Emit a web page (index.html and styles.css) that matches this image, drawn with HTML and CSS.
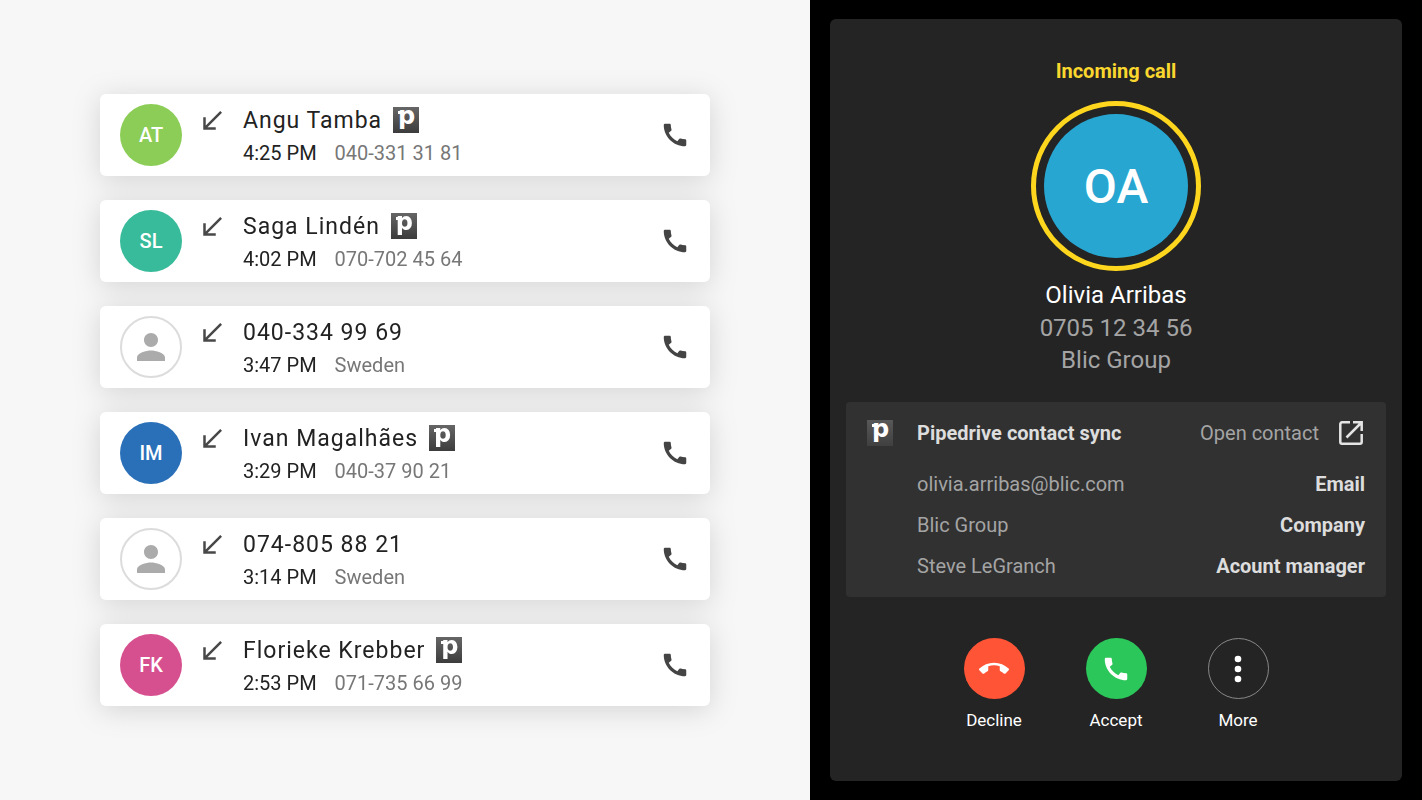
FILE: index.html
```
<!DOCTYPE html>
<html lang="en">
<head>
    <meta charset="UTF-8">
    <meta name="viewport" content="width=device-width, initial-scale=1.0">
    <title>Calls</title>
    <link rel="stylesheet" href="styles.css">
</head>
<body>
    <!-- Shared icons -->
    <svg class="sprite" aria-hidden="true">
        <symbol id="icon-received" viewBox="0 0 24 24">
            <path d="M20 5.41L18.59 4 7 15.59V9H5v10h10v-2H8.41z"/>
        </symbol>
        <symbol id="icon-phone" viewBox="0 0 24 24">
            <path d="M20.01 15.38c-1.23 0-2.42-.2-3.53-.56a.977.977 0 0 0-1.01.24l-1.57 1.97c-2.83-1.35-5.48-3.9-6.89-6.83l1.95-1.66c.27-.28.35-.67.24-1.02-.37-1.11-.56-2.3-.56-3.53 0-.54-.45-.99-.99-.99H4.19C3.65 3 3 3.24 3 3.99 3 13.28 10.73 21 20.01 21c.71 0 .99-.63.99-1.18v-3.45c0-.54-.45-.99-.99-.99z"/>
        </symbol>
        <symbol id="icon-person" viewBox="0 0 24 24">
            <path d="M12 12c2.21 0 4-1.79 4-4s-1.79-4-4-4-4 1.79-4 4 1.79 4 4 4zm0 2c-2.67 0-8 1.34-8 4v2h16v-2c0-2.66-5.33-4-8-4z"/>
        </symbol>
    </svg>

    <!-- Recent calls -->
    <main class="recent">
        <ul class="call-list">
            <li class="call">
                <div class="avatar green">AT</div>
                <svg class="received"><use href="#icon-received"/></svg>
                <div class="call-info">
                    <div class="call-name">Angu Tamba <span class="logo">p</span></div>
                    <div class="call-meta"><time>4:25 PM</time><span>040-331 31 81</span></div>
                </div>
                <button class="call-button" aria-label="Call Angu Tamba"><svg><use href="#icon-phone"/></svg></button>
            </li>
            <li class="call">
                <div class="avatar teal">SL</div>
                <svg class="received"><use href="#icon-received"/></svg>
                <div class="call-info">
                    <div class="call-name">Saga Lindén <span class="logo">p</span></div>
                    <div class="call-meta"><time>4:02 PM</time><span>070-702 45 64</span></div>
                </div>
                <button class="call-button" aria-label="Call Saga Lindén"><svg><use href="#icon-phone"/></svg></button>
            </li>
            <li class="call">
                <div class="avatar unknown"><svg><use href="#icon-person"/></svg></div>
                <svg class="received"><use href="#icon-received"/></svg>
                <div class="call-info">
                    <div class="call-name">040-334 99 69</div>
                    <div class="call-meta"><time>3:47 PM</time><span>Sweden</span></div>
                </div>
                <button class="call-button" aria-label="Call 040-334 99 69"><svg><use href="#icon-phone"/></svg></button>
            </li>
            <li class="call">
                <div class="avatar blue">IM</div>
                <svg class="received"><use href="#icon-received"/></svg>
                <div class="call-info">
                    <div class="call-name">Ivan Magalhães <span class="logo">p</span></div>
                    <div class="call-meta"><time>3:29 PM</time><span>040-37 90 21</span></div>
                </div>
                <button class="call-button" aria-label="Call Ivan Magalhães"><svg><use href="#icon-phone"/></svg></button>
            </li>
            <li class="call">
                <div class="avatar unknown"><svg><use href="#icon-person"/></svg></div>
                <svg class="received"><use href="#icon-received"/></svg>
                <div class="call-info">
                    <div class="call-name">074-805 88 21</div>
                    <div class="call-meta"><time>3:14 PM</time><span>Sweden</span></div>
                </div>
                <button class="call-button" aria-label="Call 074-805 88 21"><svg><use href="#icon-phone"/></svg></button>
            </li>
            <li class="call">
                <div class="avatar pink">FK</div>
                <svg class="received"><use href="#icon-received"/></svg>
                <div class="call-info">
                    <div class="call-name">Florieke Krebber <span class="logo">p</span></div>
                    <div class="call-meta"><time>2:53 PM</time><span>071-735 66 99</span></div>
                </div>
                <button class="call-button" aria-label="Call Florieke Krebber"><svg><use href="#icon-phone"/></svg></button>
            </li>
        </ul>
    </main>

    <!-- Incoming call -->
    <aside class="incoming">
        <div class="incoming-card">
            <h1>Incoming call</h1>
            <div class="ring"><div class="caller-avatar">OA</div></div>
            <div class="caller">
                <h2>Olivia Arribas</h2>
                <p>0705 12 34 56</p>
                <p>Blic Group</p>
            </div>

            <section class="sync">
                <div class="sync-header">
                    <span class="logo">p</span>
                    <h3>Pipedrive contact sync</h3>
                    <a href="#contact">Open contact
                        <svg viewBox="0 0 24 24"><path d="M11 1.3H3A1.7 1.7 0 0 0 1.3 3v18A1.7 1.7 0 0 0 3 22.7h18a1.7 1.7 0 0 0 1.7-1.7v-8M14 1.3h8.7V10M22.5 1.5l-15 15"/></svg>
                    </a>
                </div>
                <dl>
                    <div><dt>Email</dt><dd>olivia.arribas@blic.com</dd></div>
                    <div><dt>Company</dt><dd>Blic Group</dd></div>
                    <div><dt>Acount manager</dt><dd>Steve LeGranch</dd></div>
                </dl>
            </section>

            <div class="actions">
                <button class="action">
                    <span class="circle decline"><svg viewBox="0 0 24 24"><path d="M12 9c-1.6 0-3.15.25-4.6.72v3.1c0 .39-.23.74-.56.9-.98.49-1.87 1.12-2.66 1.85-.18.18-.43.28-.7.28-.28 0-.53-.11-.71-.29L.29 13.08c-.18-.17-.29-.42-.29-.7 0-.28.11-.53.29-.71C3.34 8.78 7.46 7 12 7s8.66 1.78 11.71 4.67c.18.18.29.43.29.71 0 .28-.11.53-.29.71l-2.48 2.48c-.18.18-.43.29-.71.29-.27 0-.52-.11-.7-.28-.79-.74-1.69-1.36-2.67-1.85-.33-.16-.56-.5-.56-.9v-3.1C15.15 9.25 13.6 9 12 9z"/></svg></span>
                    Decline
                </button>
                <button class="action">
                    <span class="circle accept"><svg><use href="#icon-phone"/></svg></span>
                    Accept
                </button>
                <button class="action">
                    <span class="circle more"><svg viewBox="0 0 30 30"><circle cx="15" cy="5" r="3.3"/><circle cx="15" cy="15" r="3.3"/><circle cx="15" cy="25" r="3.3"/></svg></span>
                    More
                </button>
            </div>
        </div>
    </aside>
</body>
</html>
```
FILE: styles.css
```
* {
    box-sizing: border-box;
}
body {
    margin: 0;
    min-height: 100vh;
    display: grid;
    grid-template-columns: 810fr 612fr;
    font-family: Roboto, Arial, sans-serif;
    font-size: 20px;
    background-color: #f7f7f7;
}
h1, h2, h3, p, dl, dd {
    margin: 0;
}
button {
    border: none;
    padding: 0;
    background: none;
    font-family: inherit;
    cursor: pointer;
}
svg {
    display: block;
    width: 30px;
    height: 30px;
    fill: currentColor;
}
.sprite {
    position: absolute;
    width: 0;
    height: 0;
}
/* Recent calls */
.recent {
    display: flex;
    flex-direction: column;
    justify-content: center;
    padding: 24px 100px;
}
.call-list {
    list-style: none;
    margin: 0;
    padding: 0;
    display: flex;
    flex-direction: column;
    gap: 24px;
    /* one shadow for the whole list, so it never falls on a card */
    filter: drop-shadow(0 4px 14px rgba(0, 0, 0, 0.14));
}
.call {
    display: flex;
    align-items: flex-start;
    padding: 10px 20px;
    border-radius: 6px;
    background-color: white;
}
.avatar {
    width: 62px;
    height: 62px;
    border-radius: 50%;
    display: flex;
    justify-content: center;
    align-items: center;
    color: white;
    font-weight: 500;
}
.green { background-color: #8bcd56; }
.teal { background-color: #37bb9a; }
.blue { background-color: #2a70b8; }
.pink { background-color: #d6508f; }
.unknown {
    border: 2px solid #dcdcdc;
    color: #ababab;
}
.unknown svg {
    width: 42px;
    height: 42px;
}
.received {
    margin: 2px 16px 0 15px;
    color: #484848;
}
.call-info {
    flex: 1;
    line-height: 33px;
    height: 62px;
    color: #222;
}
.call-name {
    display: flex;
    align-items: center;
    gap: 11px;
    height: 33px;
    font-size: 23px;
    letter-spacing: 1px;
}
.call-meta {
    display: flex;
    gap: 18px;
}
.call-meta span {
    color: #777;
}
.call-button {
    align-self: center;
    color: #444;
}
/* Pipedrive badge */
.logo {
    position: relative;
    width: 26px;
    height: 26px;
    padding-left: 1px;
    background: linear-gradient(#666, #3c3c3c);
    color: white;
    font: bold 24px/18px "DejaVu Sans", sans-serif;
    letter-spacing: 0;
    text-align: center;
}
.logo::before {
    content: "";
    position: absolute;
    top: 4px;
    left: 5px;
    width: 4px;
    height: 3px;
    background-color: white;
}
.call-name .logo {
    margin-bottom: 2px;
}
/* Incoming call */
.incoming {
    display: flex;
    padding: 19px 20px;
    background-color: black;
}
.incoming-card {
    flex: 1;
    padding: 40px 16px;
    border-radius: 6px;
    background-color: #242424;
    color: white;
    text-align: center;
}
.incoming h1 {
    font-size: 20px;
    line-height: 24px;
    font-weight: 700;
    color: #fad72e;
}
.ring {
    width: 170px;
    height: 170px;
    margin: 18px auto 8px;
    padding: 8px;
    border: 5px solid #fed61e;
    border-radius: 50%;
}
.caller-avatar {
    height: 100%;
    border-radius: 50%;
    background-color: #27a6d1;
    display: flex;
    justify-content: center;
    align-items: center;
    font-size: 48px;
    font-weight: 500;
}
.caller {
    font-size: 24px;
    line-height: 32px;
    color: #a4a4a4;
}
.caller h2 {
    margin-bottom: 1px;
    font-size: 24px;
    font-weight: 400;
    color: white;
}
.sync {
    margin-top: 26px;
    padding: 15px 21px 10px;
    border-radius: 4px;
    background-color: #313131;
    color: #a4a4a4;
}
.sync-header {
    display: flex;
    align-items: center;
    height: 32px;
    margin-bottom: 15px;
}
.sync .logo {
    background: linear-gradient(#585858, #404040);
}
.sync h3 {
    flex: 1;
    margin-left: 24px;
    font-size: 20px;
    text-align: left;
    color: #ddd;
}
.sync a {
    display: flex;
    align-items: center;
    gap: 20px;
    margin-right: 2px;
    color: inherit;
    text-decoration: none;
}
.sync a svg {
    width: 24px;
    height: 24px;
    fill: none;
    stroke: #e4e4e4;
    stroke-width: 2.5;
}
.sync dl {
    margin-left: 50px;
}
.sync dl div {
    display: flex;
    flex-direction: row-reverse;
    justify-content: space-between;
    line-height: 41px;
}
.sync dt {
    font-weight: 700;
    color: #ddd;
}
/* Call actions */
.actions {
    display: flex;
    justify-content: center;
    gap: 42px;
    margin-top: 41px;
}
.action {
    width: 80px;
    color: white;
    font-size: 17px;
    line-height: 20px;
}
.circle {
    width: 61px;
    height: 61px;
    margin: 0 auto 11px;
    border-radius: 50%;
    display: flex;
    justify-content: center;
    align-items: center;
}
.decline { background-color: #ff5436; }
.accept { background-color: #2cc75a; }
.more { border: 1px solid #888; }
```
